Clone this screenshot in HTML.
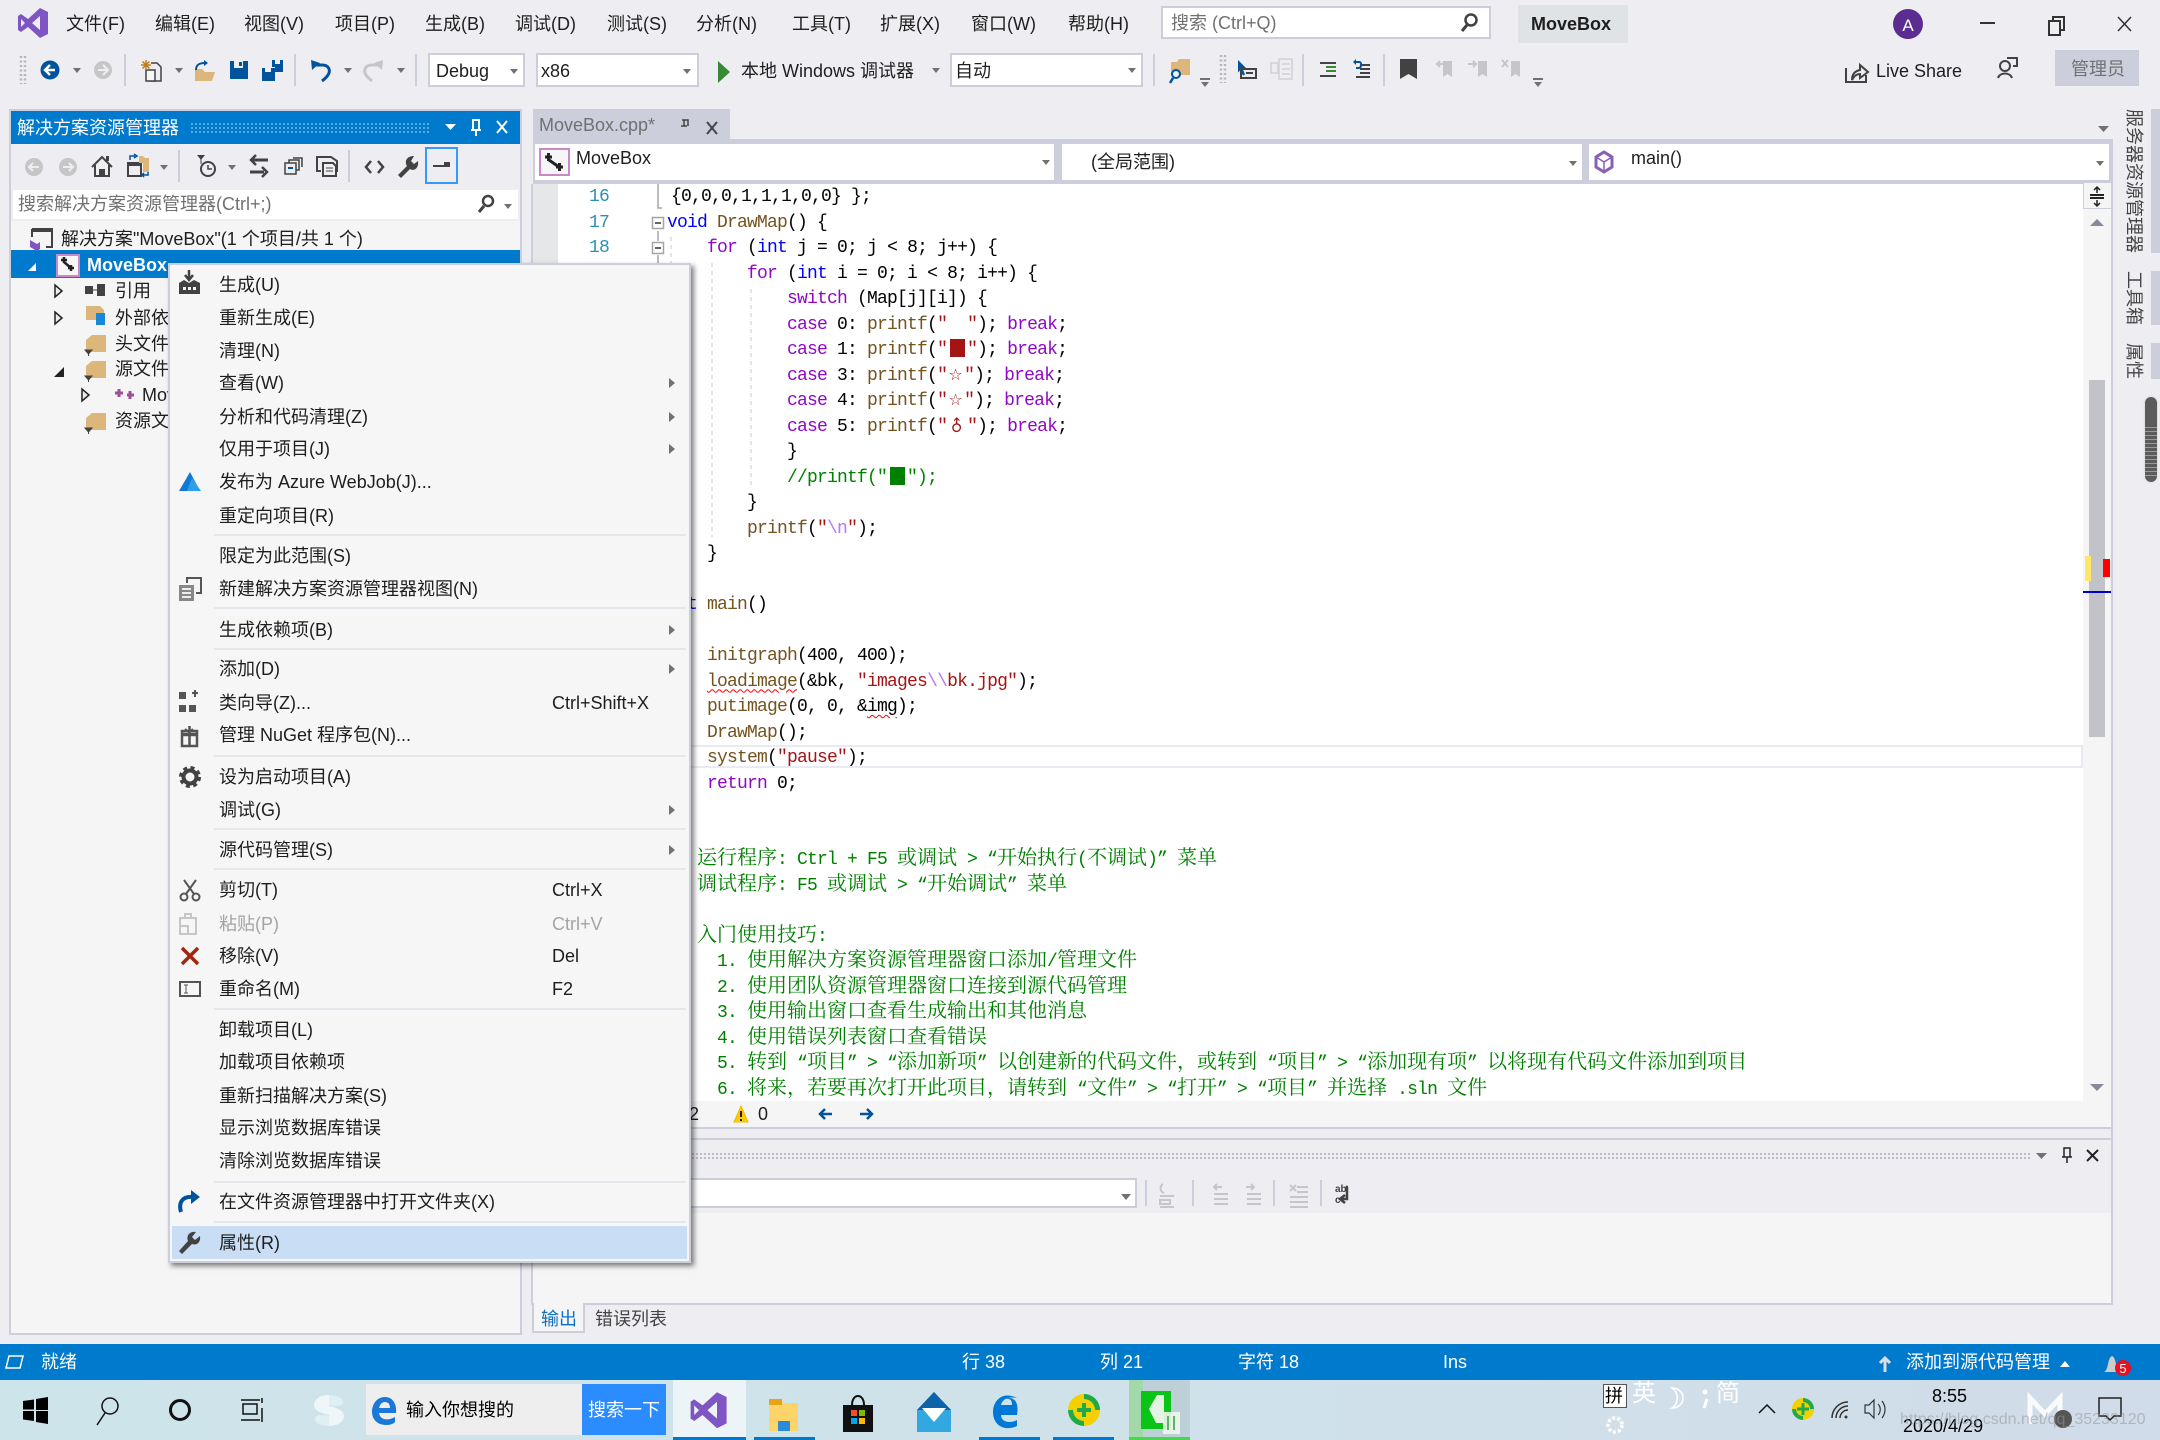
<!DOCTYPE html>
<html lang="zh-CN"><head><meta charset="utf-8"><title>MoveBox - Visual Studio</title>
<style>
html,body{margin:0;padding:0}
body{width:2160px;height:1440px;position:relative;overflow:hidden;background:#eeeef2;font:18px/26px "Liberation Sans","Noto Sans CJK SC",sans-serif;color:#1e1e1e}
.r{position:absolute}
.t{position:absolute;white-space:nowrap;line-height:26px;height:26px}
.g{color:#717171}.w{color:#fff}.d{color:#a2a4a5}
svg{position:absolute;left:0;top:0;width:2160px;height:1440px;pointer-events:none}
.c{position:absolute;white-space:pre;height:25.5px;font:18px/25.5px "Liberation Mono",monospace;letter-spacing:-.8px;color:#000;margin-top:2px}
.c i{font:20px/25.5px "Noto Serif CJK SC",serif;letter-spacing:0}
.c.x{margin-top:-3px}
.k{color:#8f08c4}.b{color:#00f}.f{color:#74531f}.s{color:#a31515}.e{color:#b776fb}.m{color:#008000}
.n{color:#2b91af;width:40px;text-align:right}
.sq{text-decoration:underline wavy #f00 1px;text-underline-offset:3px}
.bx{display:inline-block;width:15px;height:18px;margin:0 2.5px;vertical-align:-3px}
.sx{display:inline-block;width:17px;letter-spacing:0;font:16px/20px "DejaVu Sans",sans-serif;text-align:center}
.sep{position:absolute;left:214px;width:472px;height:2px;background:#e6e7ec}
.vt{position:absolute;writing-mode:vertical-rl;text-orientation:sideways;white-space:nowrap;color:#444;font-size:18px;line-height:20px}
</style></head><body>

<!-- title + toolbar boxes -->
<div class="r" style="left:1161px;top:6px;width:326px;height:29px;background:#fff;border:2px solid #cccedb"></div>
<div class="r" style="left:1518px;top:5px;width:110px;height:38px;background:#dfe3e6"></div>
<div class="r" style="left:428px;top:53px;width:93px;height:30px;background:#fff;border:2px solid #cccedb"></div>
<div class="r" style="left:536px;top:53px;width:159px;height:30px;background:#fff;border:2px solid #cccedb"></div>
<div class="r" style="left:950px;top:53px;width:189px;height:30px;background:#fff;border:2px solid #cccedb"></div>
<div class="r" style="left:2055px;top:50px;width:84px;height:36px;background:#cccedb"></div>

<span class="t" style="left:66px;top:11px">文件(F)</span>
<span class="t" style="left:155px;top:11px">编辑(E)</span>
<span class="t" style="left:244px;top:11px">视图(V)</span>
<span class="t" style="left:335px;top:11px">项目(P)</span>
<span class="t" style="left:425px;top:11px">生成(B)</span>
<span class="t" style="left:515px;top:11px">调试(D)</span>
<span class="t" style="left:607px;top:11px">测试(S)</span>
<span class="t" style="left:696px;top:11px">分析(N)</span>
<span class="t" style="left:792px;top:11px">工具(T)</span>
<span class="t" style="left:880px;top:11px">扩展(X)</span>
<span class="t" style="left:971px;top:11px">窗口(W)</span>
<span class="t" style="left:1068px;top:11px">帮助(H)</span>
<span class="t g" style="left:1171px;top:10px">搜索 (Ctrl+Q)</span>
<span class="t" style="left:1531px;top:11px;font-weight:bold">MoveBox</span>
<span class="t" style="left:436px;top:58px">Debug</span>
<span class="t" style="left:541px;top:58px">x86</span>
<span class="t" style="left:741px;top:58px">本地 Windows 调试器</span>
<span class="t" style="left:955px;top:58px">自动</span>
<span class="t" style="left:1876px;top:58px">Live Share</span>
<span class="t g" style="left:2071px;top:56px">管理员</span>

<!-- solution explorer panel -->
<div class="r" style="left:9px;top:109px;width:513px;height:1226px;background:#cccedb"></div>
<div class="r" style="left:11px;top:111px;width:509px;height:33px;background:#007acc"></div>
<div class="r" style="left:11px;top:144px;width:509px;height:44px;background:#eeeef2"></div>
<div class="r" style="left:11px;top:188px;width:509px;height:33px;background:#eeeef2"></div>
<div class="r" style="left:13px;top:190px;width:505px;height:29px;background:#fff"></div>
<div class="r" style="left:11px;top:221px;width:509px;height:1112px;background:#f5f5f5"></div>
<div class="r" style="left:11px;top:250px;width:509px;height:28px;background:#007acc"></div>
<div class="r" style="left:425px;top:147px;width:29px;height:33px;border:2px solid #3399ff"></div>
<div class="r" style="left:190px;top:122px;width:240px;height:12px;background-image:radial-gradient(#5aaee0 1px,transparent 1.2px);background-size:4px 4px"></div>
<span class="t w" style="left:17px;top:115px">解决方案资源管理器</span>
<span class="t g" style="left:18px;top:191px">搜索解决方案资源管理器(Ctrl+;)</span>
<span class="t" style="left:61px;top:226px">解决方案"MoveBox"(1 个项目/共 1 个)</span>
<span class="t w" style="left:87px;top:252px;font-weight:bold">MoveBox</span>
<span class="t" style="left:115px;top:278px">引用</span>
<span class="t" style="left:115px;top:305px">外部依赖项</span>
<span class="t" style="left:115px;top:331px">头文件</span>
<span class="t" style="left:115px;top:356px">源文件</span>
<span class="t" style="left:142px;top:382px">MoveBox.cpp</span>
<span class="t" style="left:115px;top:408px">资源文件</span>

<!-- document well -->
<div class="r" style="left:533px;top:109px;width:197px;height:30px;background:#cccedb"></div>
<div class="r" style="left:533px;top:139px;width:1580px;height:45px;background:#cccedb"></div>
<div class="r" style="left:535px;top:144px;width:519px;height:36px;background:#fff"></div>
<div class="r" style="left:1062px;top:144px;width:520px;height:36px;background:#fff"></div>
<div class="r" style="left:1589px;top:144px;width:520px;height:36px;background:#fff"></div>
<span class="t g" style="left:539px;top:112px">MoveBox.cpp*</span>
<span class="t" style="left:576px;top:145px">MoveBox</span>
<span class="t" style="left:1091px;top:149px">(全局范围)</span>
<span class="t" style="left:1631px;top:145px">main()</span>

<div class="r" style="left:533px;top:184px;width:1580px;height:917px;background:#fff"></div>
<div class="r" style="left:533px;top:184px;width:25px;height:917px;background:#e6e7e8"></div>
<div class="r" style="left:2083px;top:184px;width:28px;height:917px;background:#f5f5f5"></div>
<div class="r" style="left:2111px;top:184px;width:2px;height:1121px;background:#cccedb"></div>
<div class="r" style="left:2083px;top:183px;width:28px;height:26px;background:#f5f5f5;border-bottom:1px solid #cccedb;border-left:1px solid #cccedb;box-sizing:border-box"></div>
<div class="r" style="left:2089px;top:380px;width:16px;height:357px;background:#c2c3c9"></div>
<div class="r" style="left:2085px;top:556px;width:6px;height:25px;background:#ffe76a"></div>
<div class="r" style="left:2103px;top:559px;width:7px;height:18px;background:#f00"></div>
<div class="r" style="left:2083px;top:591px;width:28px;height:2px;background:#00c"></div>
<div class="r" style="left:691px;top:745px;width:1390px;height:19px;border:2px solid #eaeaf2;border-left:0"></div>

<!-- code -->
<div class="c n" style="left:569px;top:183px">16</div>
<div class="c n" style="left:569px;top:208.5px">17</div>
<div class="c n" style="left:569px;top:234px">18</div>
<div class="c" style="left:671px;top:183px">{0,0,0,1,1,1,0,0} };</div>
<div class="c" style="left:667px;top:208.5px"><span class="b">void</span> <span class="f">DrawMap</span>() {</div>
<div class="c" style="left:707px;top:234px"><span class="k">for</span> (<span class="b">int</span> j = 0; j &lt; 8; j++) {</div>
<div class="c" style="left:747px;top:259.5px"><span class="k">for</span> (<span class="b">int</span> i = 0; i &lt; 8; i++) {</div>
<div class="c" style="left:787px;top:285px"><span class="k">switch</span> (Map[j][i]) {</div>
<div class="c" style="left:787px;top:310.5px"><span class="k">case</span> 0: <span class="f">printf</span>(<span class="s">"  "</span>); <span class="k">break</span>;</div>
<div class="c" style="left:787px;top:336px"><span class="k">case</span> 1: <span class="f">printf</span>(<span class="s">"<span class="bx" style="background:#a31515" aria-label="■"></span>"</span>); <span class="k">break</span>;</div>
<div class="c" style="left:787px;top:361.5px"><span class="k">case</span> 3: <span class="f">printf</span>(<span class="s">"<span class="sx">☆</span>"</span>); <span class="k">break</span>;</div>
<div class="c" style="left:787px;top:387px"><span class="k">case</span> 4: <span class="f">printf</span>(<span class="s">"<span class="sx">☆</span>"</span>); <span class="k">break</span>;</div>
<div class="c" style="left:787px;top:412.5px"><span class="k">case</span> 5: <span class="f">printf</span>(<span class="s">"<span class="sx" style="width:20px;transform:rotate(-45deg)">♂</span>"</span>); <span class="k">break</span>;</div>
<div class="c" style="left:787px;top:438px">}</div>
<div class="c m" style="left:787px;top:463.5px">//printf("<span class="bx" style="background:#008000"></span>");</div>
<div class="c" style="left:747px;top:489px">}</div>
<div class="c" style="left:747px;top:514.5px"><span class="f">printf</span>(<span class="s">"</span><span class="e">\n</span><span class="s">"</span>);</div>
<div class="c" style="left:707px;top:540px">}</div>
<div class="c" style="left:667px;top:591px"><span class="b">int</span> <span class="f">main</span>()</div>
<div class="c" style="left:707px;top:642px"><span class="f">initgraph</span>(400, 400);</div>
<div class="c" style="left:707px;top:667.5px"><span class="f sq">loadimage</span>(&amp;bk, <span class="s">"images</span><span class="e">\\</span><span class="s">bk.jpg"</span>);</div>
<div class="c" style="left:707px;top:693px"><span class="f">putimage</span>(0, 0, &amp;<span class="sq">img</span>);</div>
<div class="c" style="left:707px;top:718.5px"><span class="f">DrawMap</span>();</div>
<div class="c" style="left:707px;top:744px"><span class="f">system</span>(<span class="s">"pause"</span>);</div>
<div class="c" style="left:707px;top:769.5px"><span class="k">return</span> 0;</div>
<div class="c x m" style="left:697px;top:846px"><i>运行程序</i>: Ctrl + F5 <i>或调试</i> &gt; “<i>开始执行</i>(<i>不调试</i>)” <i>菜单</i></div>
<div class="c x m" style="left:697px;top:871.5px"><i>调试程序</i>: F5 <i>或调试</i> &gt; “<i>开始调试</i>” <i>菜单</i></div>
<div class="c x m" style="left:697px;top:922.5px"><i>入门使用技巧</i>:</div>
<div class="c x m" style="left:717px;top:948px">1. <i>使用解决方案资源管理器窗口添加</i>/<i>管理文件</i></div>
<div class="c x m" style="left:717px;top:973.5px">2. <i>使用团队资源管理器窗口连接到源代码管理</i></div>
<div class="c x m" style="left:717px;top:999px">3. <i>使用输出窗口查看生成输出和其他消息</i></div>
<div class="c x m" style="left:717px;top:1024.5px">4. <i>使用错误列表窗口查看错误</i></div>
<div class="c x m" style="left:717px;top:1050px">5. <i>转到</i> “<i>项目</i>” &gt; “<i>添加新项</i>” <i>以创建新的代码文件，或转到</i> “<i>项目</i>” &gt; “<i>添加现有项</i>” <i>以将现有代码文件添加到项目</i></div>
<div class="c x m" style="left:717px;top:1075.5px">6. <i>将来，若要再次打开此项目，请转到</i> “<i>文件</i>” &gt; “<i>打开</i>” &gt; “<i>项目</i>” <i>并选择</i> .sln <i>文件</i></div>

<!-- editor status + lower panel -->
<div class="r" style="left:533px;top:1101px;width:1578px;height:26px;background:#f5f5f5"></div>
<div class="r" style="left:533px;top:1127px;width:1580px;height:2px;background:#cccedb"></div>
<div class="r" style="left:533px;top:1138px;width:1580px;height:2px;background:#cccedb"></div>
<div class="r" style="left:691px;top:1152px;width:1340px;height:8px;background-image:radial-gradient(#b8b9c4 1px,transparent 1.2px);background-size:4px 4px"></div>
<div class="r" style="left:660px;top:1178px;width:473px;height:26px;background:#fff;border:2px solid #cccedb"></div>
<div class="r" style="left:533px;top:1213px;width:1578px;height:90px;background:#f5f5f5"></div>
<div class="r" style="left:533px;top:1303px;width:1580px;height:2px;background:#cccedb"></div>
<div class="r" style="left:531px;top:184px;width:2px;height:1121px;background:#cccedb"></div>
<div class="r" style="left:532px;top:1303px;width:53px;height:30px;background:#f5f5f5;border:solid #cccedb;border-width:0 2px 2px 2px;box-sizing:border-box"></div>
<span class="t" style="left:541px;top:1306px;color:#0e70c0">输出</span>
<span class="t" style="left:595px;top:1306px;color:#444">错误列表</span>
<span class="t" style="left:689px;top:1101px">2</span>
<span class="t" style="left:758px;top:1101px">0</span>

<!-- right tool tabs -->
<span class="vt" style="left:2124px;top:109px">服务器资源管理器</span>
<span class="vt" style="left:2124px;top:271px">工具箱</span>
<span class="vt" style="left:2124px;top:343px">属性</span>
<div class="r" style="left:2151px;top:109px;width:9px;height:144px;background:#cccedb"></div>
<div class="r" style="left:2151px;top:271px;width:9px;height:54px;background:#cccedb"></div>
<div class="r" style="left:2151px;top:343px;width:9px;height:36px;background:#cccedb"></div>
<div class="r" style="left:2145px;top:397px;width:12px;height:85px;border-radius:6px;background:repeating-linear-gradient(#3fd45c 0 1px,#5c5c5c 1px 4px) 0 30px/12px 51px no-repeat,#5c5c5c;box-shadow:0 0 2px #ccc"></div>

<!-- status bar + taskbar -->
<div class="r" style="left:0;top:1344px;width:2160px;height:36px;background:#007acc"></div>
<div class="r" style="left:0;top:1380px;width:2160px;height:60px;background:linear-gradient(90deg,#cde4ea,#cfe2ea 50%,#d0dce9)"></div>
<span class="t w" style="left:41px;top:1349px">就绪</span>
<span class="t w" style="left:962px;top:1349px">行 38</span>
<span class="t w" style="left:1100px;top:1349px">列 21</span>
<span class="t w" style="left:1238px;top:1349px">字符 18</span>
<span class="t w" style="left:1443px;top:1349px">Ins</span>
<span class="t w" style="left:1906px;top:1349px">添加到源代码管理</span>

<div class="r" style="left:366px;top:1384px;width:216px;height:51px;background:#eee"></div>
<div class="r" style="left:582px;top:1384px;width:84px;height:51px;background:#2a8cff"></div>
<span class="t" style="left:406px;top:1397px;color:#000">输入你想搜的</span>
<span class="t w" style="left:588px;top:1397px">搜索一下</span>
<div class="r" style="left:673px;top:1380px;width:73px;height:60px;background:#edf4f8"></div>
<div class="r" style="left:673px;top:1437px;width:73px;height:3px;background:#0078cf"></div>
<div class="r" style="left:754px;top:1437px;width:61px;height:3px;background:#0078cf"></div>
<div class="r" style="left:979px;top:1437px;width:61px;height:3px;background:#0078cf"></div>
<div class="r" style="left:1053px;top:1437px;width:61px;height:3px;background:#0078cf"></div>
<div class="r" style="left:1129px;top:1380px;width:61px;height:60px;background:linear-gradient(90deg,#a3d8ab 0 14px,#bdd0d8 14px)"></div>
<div class="r" style="left:1129px;top:1437px;width:61px;height:3px;background:#44d84a"></div>

<div class="r" style="left:1603px;top:1384px;width:22px;height:22px;background:#fff;border:1px solid #555"></div>
<span class="t" style="left:1605px;top:1383px;color:#000">拼</span>
<span class="t w" style="left:1632px;top:1381px;font-size:24px">英</span>
<span class="t w" style="left:1716px;top:1381px;font-size:24px">简</span>
<span class="t" style="left:1932px;top:1383px;color:#000">8:55</span>
<span class="t" style="left:1903px;top:1413px;color:#000">2020/4/29</span>

<!-- icons -->
<svg viewBox="0 0 2160 1440" xmlns="http://www.w3.org/2000/svg">
<path fill="#7f55c4" fill-rule="evenodd" d="M40 8l8 4v22l-8 4-12-11-7 5-3-2V16l3-2 7 5zM40 16l-8 7 8 7zM21 19v8l4-4z"/>
<!-- carets -->
<g fill="#717171">
<path d="M73 68h8l-4 5zM175 68h8l-4 5zM344 68h8l-4 5zM397 68h8l-4 5zM510 69h8l-4 5zM683 69h8l-4 5zM932 68h8l-4 5zM1128 68h8l-4 5z"/>
<path d="M1200 78h10v2h-10zM1201 82h8l-4 5zM1533 78h10v2h-10zM1534 82h8l-4 5z"/>
<path d="M160 165h8l-4 5zM228 165h8l-4 5zM504 204h8l-4 5zM1042 160h8l-4 5zM1139 161h8l-4 5zM1569 161h8l-4 5zM2096 161h8l-4 5zM2098 126h11l-5.500 6zM1121 1194h10l-5 6zM2036 1153h11l-5.500 6z"/>
</g>
<!-- back / forward -->
<circle cx="50" cy="70" r="9.500" fill="#00539c"/><path d="M55 70H46M50 65l-5 5 5 5" fill="none" stroke="#fff" stroke-width="2.500"/>
<circle cx="103" cy="70" r="9" fill="#c6c6c9"/><path d="M98 70h9M103 65l5 5-5 5" fill="none" stroke="#eee" stroke-width="2"/>
<path d="M125 54v32M295 54v32M416 54v32M1154 54v32M1303 54v32M1384 54v32M179 150v32M349 150v32" stroke="#cccedb" stroke-width="2"/>
<path d="M21 56v28M25 56v28M1221 55v28M1225 55v28" stroke="#b5b6bb" stroke-width="2.500" stroke-dasharray="2 2.500"/>
<!-- new project -->
<path d="M151 63h6l4 4v14h-11v-4" fill="none" stroke="#424242" stroke-width="1.500"/><path d="M146 70v11h9V70z" fill="#f6f6f6" stroke="#424242" stroke-width="1.500"/>
<path d="M146 60v10M141 65h10M142.500 61.500l7 7M149.500 61.500l-7 7" stroke="#c27d1a" stroke-width="1.500"/>
<!-- open folder -->
<path d="M195 69h7l3 3h10l-3 9h-17z" fill="#dcb67a"/><path d="M196 70c0-5 3-7 9-7" fill="none" stroke="#00539c" stroke-width="2"/><path d="M204 60l4 3-4 3z" fill="#00539c"/>
<!-- save -->
<path d="M230 61h18v18h-18z" fill="#00539c"/><path d="M234 61h9v7h-9z" fill="#eee"/><rect x="239" y="62" width="3" height="4" fill="#00539c"/>
<path d="M262 68h13v13h-13z" fill="#00539c"/><path d="M272 60h11v12h-8v-5h-3z" fill="#00539c"/><rect x="265" y="68" width="6" height="4" fill="#eee"/><rect x="275" y="60" width="5" height="4" fill="#eee"/>
<!-- undo redo -->
<path d="M316 65h6c7 0 8 5 7 8-1 3-3 5-7 8" fill="none" stroke="#00539c" stroke-width="3"/><path d="M311 60l1 10 8-7z" fill="#00539c"/>
<path d="M378 65h-6c-7 0-8 5-7 8 1 3 3 5 7 8" fill="none" stroke="#c6c6c9" stroke-width="3"/><path d="M383 60l-1 10-8-7z" fill="#c6c6c9"/>
<!-- play -->
<path d="M718 61l12 11-12 11z" fill="#388a34"/>
<!-- search glass -->
<g fill="none" stroke="#424242"><circle cx="1471" cy="20" r="5.500" stroke-width="2.500"/><path d="M1467 25l-5 6" stroke-width="3"/>
<circle cx="488" cy="201" r="5" stroke-width="2.500"/><path d="M484 206l-5 6" stroke-width="3"/></g>
<!-- avatar -->
<circle cx="1908" cy="24" r="15" fill="#5c2d91"/><text x="1908" y="31" font-size="17" fill="#fff" text-anchor="middle" font-family="Liberation Sans">A</text>
<!-- window buttons -->
<path d="M1980 23h15" stroke="#333" stroke-width="2"/><path d="M2049 21h11v14h-11zM2053 21v-4h11v13h-4" fill="none" stroke="#333" stroke-width="2"/><path d="M2118 17l13 14m0-14l-13 14" stroke="#333" stroke-width="1.500"/>
<!-- right toolbar icons -->
<path d="M1171 62h6l2-3h11v16h-19z" fill="#dcb67a"/><circle cx="1176" cy="74" r="4" fill="#eee" stroke="#00539c" stroke-width="2"/><path d="M1173 78l-3 5" stroke="#00539c" stroke-width="2.500"/>
<path d="M1238 60l9 9-4 .5 2 5-2 1-3-5-2 2z" fill="#00539c"/><path d="M1241 69h15v9h-15zM1246 73h7" fill="none" stroke="#424242" stroke-width="2"/>
<path d="M1271 63h7v10h-7zM1279 59h13v20h-13zM1282 64h8M1282 69h8M1282 74h8" fill="none" stroke="#d0d1d5" stroke-width="1.500"/>
<path d="M1320 63h4M1324 63h12M1326 67h10M1326 71h10M1320 76h16" stroke="#424242" stroke-width="2"/><path d="M1326 67h10M1326 71h10" stroke="#388a34" stroke-width="2"/>
<path d="M1360 65h10M1360 69h10M1360 73h10M1356 77h14" stroke="#424242" stroke-width="2"/><path d="M1354 62h5c3 0 3 5 0 6h-3" fill="none" stroke="#00539c" stroke-width="2"/><path d="M1356 59v6l-3-3z" fill="#00539c"/>
<path d="M1400 59h17v20l-8.500-5-8.500 5z" fill="#424242"/>
<path d="M1443 61h9v16l-4.500-3-4.500 3z" fill="#c6c6c9"/><path d="M1445 64h-8M1440 61l-3 3 3 3" fill="none" stroke="#c6c6c9" stroke-width="2"/>
<path d="M1478 61h9v16l-4.500-3-4.500 3z" fill="#c6c6c9"/><path d="M1468 64h8M1473 61l3 3-3 3" fill="none" stroke="#c6c6c9" stroke-width="2"/>
<path d="M1511 61h9v16l-4.500-3-4.500 3z" fill="#c6c6c9"/><path d="M1502 60l6 7m0-7l-6 7" stroke="#c6c6c9" stroke-width="2"/>
<!-- live share -->
<path d="M1846 68v14h20V75" fill="none" stroke="#424242" stroke-width="2"/><path d="M1852 80c0-6 3-9 8-10v-5l8 7-8 6v-4c-3 0-6 2-8 6z" fill="none" stroke="#424242" stroke-width="2"/>
<circle cx="2005" cy="66" r="5" fill="none" stroke="#424242" stroke-width="2"/><path d="M1998 78c2-6 12-6 14 0" fill="none" stroke="#424242" stroke-width="2"/><path d="M2007 58h10v8h-4" fill="none" stroke="#424242" stroke-width="2"/>
<!-- explorer header -->
<path d="M445 124h11l-5.500 6z" fill="#fff"/>
<path d="M473 120h6v10h-6zM476 130v6M471 130h10" fill="none" stroke="#fff" stroke-width="2"/><path d="M497 121l10 12m0-12l-10 12" stroke="#fff" stroke-width="2"/>
<!-- explorer toolbar -->
<circle cx="34" cy="167" r="9" fill="#c6c6c9"/><path d="M39 167h-9M33 163l-4 4 4 4" fill="none" stroke="#eee" stroke-width="2"/>
<circle cx="68" cy="167" r="9" fill="#c6c6c9"/><path d="M63 167h9M69 163l4 4-4 4" fill="none" stroke="#eee" stroke-width="2"/>
<path d="M92 167l10-10 10 10M95 165v11h14v-11" fill="none" stroke="#424242" stroke-width="2"/><rect x="99" y="169" width="6" height="7" fill="#424242"/><path d="M106 156h3v5h-3z" fill="#424242"/>
<path d="M128 163h13v13h-13z" fill="none" stroke="#424242" stroke-width="2"/><path d="M128 163h13v3h-13z" fill="#424242"/><path d="M139 156h4l2 2h4v14h-6v-9h-4z" fill="#dcb67a"/><path d="M130 160v-4h5M134 154l3 2-3 2" fill="none" stroke="#00539c" stroke-width="1.500"/><path d="M148 172v3h-5M144 173l-2 2 2 2" fill="none" stroke="#00539c" stroke-width="1.500"/>
<circle cx="208" cy="169" r="7" fill="none" stroke="#424242" stroke-width="2"/><path d="M208 165v4h4" fill="none" stroke="#424242" stroke-width="1.500"/><path d="M197 155h8l-4 5z" fill="#424242"/><path d="M201 159v5" stroke="#424242"/>
<path d="M252 160h16M250 172h14" stroke="#424242" stroke-width="3"/><path d="M256 155l-5 5 5 5" fill="none" stroke="#424242" stroke-width="2.500"/><path d="M262 167l5 5-5 5" fill="none" stroke="#424242" stroke-width="2.500"/>
<path d="M285 163h11v11h-11zM289 163v-3h10v10h-3M293 158h9v9" fill="none" stroke="#424242" stroke-width="1.500"/><path d="M288 168h5" stroke="#00539c" stroke-width="2"/>
<path d="M320 157h11l6 4v10h-5M320 157h-3v14h4" fill="none" stroke="#424242" stroke-width="2"/><path d="M323 163h10l3 3v10h-13z" fill="#eee" stroke="#424242" stroke-width="2"/><path d="M326 168h7M326 171h7" stroke="#424242"/>
<path d="M371 161l-5 6 5 6M378 161l5 6-5 6" fill="none" stroke="#424242" stroke-width="2.500"/>
<path d="M414 156c-7 0-10 5-7 10l-9 9 3 3 9-9c5 3 9-2 8-8l-4 3-3-3z" fill="#424242"/>
<path d="M433 167h17v-5h-6v3h-11z" fill="#424242"/>
<!-- tree icons -->
<path d="M32 229h20v18h-6M32 229v8" fill="none" stroke="#424242" stroke-width="2"/><path d="M32 229h20v3H32z" fill="#424242"/><path d="M30 240l7 4 3-2v7l-3 2-7-4z" fill="#7f55c4"/>
<path d="M27 263v8h-8z" fill="#fff" transform="translate(9 0)"/>
<rect x="57" y="255" width="22" height="21" fill="#f6f6f6" stroke="#c78ac7" stroke-width="2"/><path d="M61 260h6M64 257v6M68 268h6M71 265v6M64 262l7 6" fill="none" stroke="#222" stroke-width="2.500"/>
<path d="M55 285v12l7-6zM55 312v12l7-6zM82 389v12l7-6z" fill="#eee" stroke="#222" stroke-width="1.500"/>
<path d="M54 377l10-10v10z" fill="#222"/>
<rect x="85" y="286" width="8" height="8" fill="#424242"/><rect x="97" y="284" width="8" height="12" fill="#424242"/><path d="M93 290h4" stroke="#424242"/>
<path d="M86 320v-14h14l4 4v10z" fill="#dcb67a"/><rect x="96" y="313" width="9" height="12" fill="#1a88d8"/>
<path d="M86 340l6-5h14v17H86z" fill="#dcb67a"/><path d="M85 350h7l-3.500 4zM88.500 353v3" stroke="#424242" fill="#424242"/>
<path d="M86 366l6-5h14v17H86z" fill="#dcb67a"/><path d="M85 376h7l-3.500 4zM88.500 379v3" stroke="#424242" fill="#424242"/>
<path d="M115 393h8M119 389v8M127 395h7M130 391v8" stroke="#9b4f96" stroke-width="3"/>
<path d="M86 418l6-5h14v17H86z" fill="#dcb67a"/><path d="M85 428h7l-3.500 4zM88.500 431v3" stroke="#424242" fill="#424242"/>
<!-- tab + nav icons -->
<path d="M681 126h6M684 120v6M682 120h6v6" fill="none" stroke="#444" stroke-width="1.500"/><path d="M707 122l10 12m0-12l-10 12" stroke="#444" stroke-width="2"/>
<rect x="540" y="149" width="29" height="26" fill="#f6f6f6" stroke="#c78ac7" stroke-width="2"/><path d="M545 157h7M548.500 153v8M556 167h7M559.500 163v8M549 160l10 7" fill="none" stroke="#222" stroke-width="3"/>
<path d="M1604 152l8 5v10l-8 5-8-5v-10z" fill="none" stroke="#8860b8" stroke-width="3"/><path d="M1604 162v10M1604 162l-8-5M1604 162l8-5" stroke="#8860b8" stroke-width="1.500"/>
<!-- splitter and scroll arrows -->
<path d="M2090 195h14M2090 198h14" stroke="#222" stroke-width="2"/><path d="M2097 187v6M2097 200v6M2094 190l3-3 3 3M2094 203l3 3 3-3" fill="none" stroke="#222" stroke-width="1.500"/>
<path d="M2090 226l7-7 7 7z" fill="#868999"/><path d="M2090 1084l7 7 7-7z" fill="#868999"/>
<!-- outlining -->
<path d="M658 184v24h4M658 231v10M658 255v8" fill="none" stroke="#a5a5a5" stroke-width="1.500"/>
<rect x="652.500" y="217.500" width="11" height="11" fill="#fff" stroke="#a5a5a5" stroke-width="1.500"/><rect x="652.500" y="242.500" width="11" height="11" fill="#fff" stroke="#a5a5a5" stroke-width="1.500"/>
<path d="M655 223h6M655 248h6" stroke="#333" stroke-width="1.500"/>
<path d="M671 237v26M712 263v274M751 289v198" stroke="#c8c8c8" stroke-dasharray="4 4"/>
<!-- lower panel icons -->
<path d="M741 1106l7 16h-14z" fill="#fc0" stroke="#f5b800"/><path d="M741 1111v6M741 1119v2" stroke="#222" stroke-width="2"/>
<path d="M832 1114h-12M825 1109l-5 5 5 5" fill="none" stroke="#00539c" stroke-width="2.500"/><path d="M860 1114h12M867 1109l5 5-5 5" fill="none" stroke="#00539c" stroke-width="2.500"/>
<path d="M2064 1148h6v9h-6zM2067 1157v6M2062 1157h10" fill="none" stroke="#222" stroke-width="1.500"/><path d="M2087 1150l11 11m0-11l-11 11" stroke="#222" stroke-width="2"/>
<path d="M1146 1180v26M1193 1180v26M1274 1180v26M1321 1180v26" stroke="#cccedb" stroke-width="2"/>
<path d="M1163 1184a5 5 0 0 0 1 9M1160 1196h14M1160 1200h10v4h-10zM1160 1207h14M1214 1194h14M1214 1199h14M1214 1204h14M1247 1194h14M1247 1199h14M1247 1204h14M1290 1197h18M1290 1202h18M1290 1207h18M1297 1187h11M1297 1192h11" stroke="#c6c6c9" stroke-width="2" fill="none"/>
<path d="M1290 1185l6 6m0-6l-6 6" stroke="#c6c6c9" stroke-width="2"/>
<path d="M1222 1187h-8M1217 1184l-3 3 3 3M1246 1187h8M1251 1184l3 3-3 3" stroke="#c6c6c9" stroke-width="2" fill="none"/>
<path d="M1348 1187h-1v12h-8M1345 1195l-5 4 5 4" fill="none" stroke="#424242" stroke-width="2.500"/>
<text x="1335" y="1192" font-size="10" fill="#424242" font-family="Liberation Sans" font-weight="bold">ab</text><text x="1335" y="1203" font-size="10" fill="#424242" font-family="Liberation Sans" font-weight="bold">c</text>
<!-- status -->
<path d="M9 1356h14l-3 12H6z" fill="none" stroke="#fff" stroke-width="1.500"/>
<path d="M1885 1358v14M1880 1363l5-5 5 5" fill="none" stroke="#ddd" stroke-width="3"/>
<path d="M2060 1367l5-6 5 6z" fill="#fff"/>
<path d="M2104 1372c5-2 3-14 8-16 5 2 3 14 8 16z" fill="#ccc"/><circle cx="2123" cy="1368" r="8" fill="#e81123"/><text x="2123" y="1373" font-size="13" fill="#fff" text-anchor="middle" font-family="Liberation Sans">5</text>
<!-- taskbar -->
<path d="M23 1401l11-1.500v10H23zM36 1399l12-2v13H36zM23 1411h11v10l-11-1.500zM36 1411h12v13l-12-2z" fill="#000"/>
<circle cx="110" cy="1406" r="8" fill="none" stroke="#111" stroke-width="1.500"/><path d="M105 1413l-8 12" stroke="#111" stroke-width="1.500"/>
<circle cx="180" cy="1410" r="9.500" fill="none" stroke="#111" stroke-width="3"/>
<path d="M241 1400h19M243 1404h14v10h-14zM241 1420h19M262 1398v5M262 1408v14" fill="none" stroke="#111" stroke-width="1.500"/>
<path d="M329 1395c-10 0-15 5-15 10s6 8 15 10zM329 1426c10 0 15-5 15-10s-6-8-15-10z" fill="#eef6f9"/><path d="M329 1395c8 0 14 3 14 7s-5 5-14 3zM329 1426c-8 0-14-3-14-7s5-5 14-3z" fill="#dff0f5"/>
<path d="M385 1397c-9 0-13 8-13 15s5 13 14 13c4 0 7-1 9-3v-5c-7 4-15 3-16-4h17c1-10-4-16-11-16zm0 5c3 0 5 2 5 6h-11c1-4 3-6 6-6z" fill="#1a78d8"/>
<g transform="translate(669 1391) scale(1.200)"><path fill="#7f55c4" fill-rule="evenodd" d="M40 8l8 4v22l-8 4-12-11-7 5-3-2V16l3-2 7 5zM40 16l-8 7 8 7zM21 19v8l4-4z" transform="translate(0 -7)"/></g>
<path d="M769 1399h12l2 4h15v28h-29z" fill="#fcd469"/><path d="M769 1399h13v6h-13z" fill="#e8a317"/><path d="M778 1431v-10h12v10z" fill="#2a8bd8"/>
<path d="M843 1405h30v27h-30z" fill="#111"/><path d="M852 1405c0-12 12-12 12 0" fill="none" stroke="#111" stroke-width="2"/><rect x="851" y="1410" width="6" height="6" fill="#f25022"/><rect x="859" y="1410" width="6" height="6" fill="#7fba00"/><rect x="851" y="1418" width="6" height="6" fill="#00a4ef"/><rect x="859" y="1418" width="6" height="6" fill="#ffb900"/>
<path d="M917 1410l17-18 17 18v22h-34z" fill="#33a8e0"/><path d="M917 1410l17-18 17 18z" fill="#0e63a8"/><path d="M922 1408h24l-12 14z" fill="#fff"/>
<path d="M1017 1398c-14-7-24 2-24 14 0 13 11 20 24 14v-6c-7 4-16 2-16-5h16c2-12-2-17-8-17-2 0-3 0-4 1 6-1 7 2 7 6h-11c1-5 6-9 16-7z" fill="#0078d7"/>
<circle cx="1084" cy="1410" r="16" fill="#f4d000"/><path d="M1084 1394a16 16 0 0 1 16 16h-5a11 11 0 0 0-11-11zM1084 1426a16 16 0 0 1-16-16h5a11 11 0 0 0 11 11z" fill="#1eaa4b"/><path d="M1084 1403v14M1077 1410h14" stroke="#1eaa4b" stroke-width="4"/>
<path d="M1141 1391h30v38h-30z" fill="#0cc418"/><path d="M1157 1395l-8 14 7 14h8v-28z" fill="#e4f4e2"/><rect x="1163" y="1412" width="17" height="22" fill="#eef5ef" opacity=".9"/><path d="M1168 1416v14M1174 1416v14" stroke="#5db56a" stroke-width="2"/>
<!-- tray -->
<path d="M1672 1388a9 11 0 0 1 0 20c6 0 11-4 11-10s-5-10-11-10z" fill="none" stroke="#fff" stroke-width="1.500"/><circle cx="1705" cy="1392" r="2.500" fill="#fff"/><path d="M1707 1399l-3 9" stroke="#fff" stroke-width="3"/>
<circle cx="1615" cy="1425" r="7" fill="none" stroke="#fff" stroke-width="3.500" stroke-dasharray="3 2"/>
<path d="M1759 1413l8-8 8 8" fill="none" stroke="#111" stroke-width="1.500"/>
<circle cx="1803" cy="1409" r="11" fill="#f4d000"/><path d="M1803 1398a11 11 0 0 1 11 11h-4a7 7 0 0 0-7-7zM1803 1420a11 11 0 0 1-11-11h4a7 7 0 0 0 7 7z" fill="#1eaa4b"/><path d="M1803 1403v12M1797 1409h12" stroke="#1eaa4b" stroke-width="3"/>
<path d="M1832 1418a16 16 0 0 1 16-16M1836 1418a12 12 0 0 1 12-12M1840 1418a8 8 0 0 1 8-8" fill="none" stroke="#333" stroke-width="1.500"/><circle cx="1846" cy="1417" r="1.500" fill="#333"/>
<path d="M1865 1405h4l5-5v18l-5-5h-4zM1878 1404c3 3 3 8 0 11M1882 1401c4 5 4 12 0 17" fill="none" stroke="#333" stroke-width="1.200"/>
<path d="M2030 1424v-26l15 16 15-16v26" fill="none" stroke="#fff" stroke-width="5" opacity=".85"/><circle cx="2063" cy="1419" r="9" fill="#555"/>
<path d="M2099 1398h22v18h-7l-4 4-4-4h-7z" fill="none" stroke="#222" stroke-width="1.500"/>
</svg>
<span class="t" style="left:1900px;top:1407px;font-size:16px;color:rgba(150,150,150,.55)">https://blog.csdn.net/qq_35233120</span>

<!-- context menu -->
<div class="r" style="left:168px;top:263px;width:519px;height:996px;padding:0;background:#f6f6f6;border:2px solid #cccedb;box-shadow:3px 3px 5px rgba(0,0,0,.5)"></div>
<div class="r" style="left:172px;top:1226px;width:515px;height:33px;background:#c9def5"></div>
<div class="sep" style="top:534px"></div><div class="sep" style="top:607px"></div><div class="sep" style="top:648px"></div><div class="sep" style="top:755px"></div><div class="sep" style="top:828px"></div><div class="sep" style="top:868px"></div><div class="sep" style="top:1008px"></div><div class="sep" style="top:1181px"></div><div class="sep" style="top:1221px"></div>
<span class="t" style="left:219px;top:272px">生成(U)</span>
<span class="t" style="left:219px;top:305px">重新生成(E)</span>
<span class="t" style="left:219px;top:338px">清理(N)</span>
<span class="t" style="left:219px;top:370px">查看(W)</span>
<span class="t" style="left:219px;top:404px">分析和代码清理(Z)</span>
<span class="t" style="left:219px;top:436px">仅用于项目(J)</span>
<span class="t" style="left:219px;top:469px">发布为 Azure WebJob(J)...</span>
<span class="t" style="left:219px;top:503px">重定向项目(R)</span>
<span class="t" style="left:219px;top:543px">限定为此范围(S)</span>
<span class="t" style="left:219px;top:576px">新建解决方案资源管理器视图(N)</span>
<span class="t" style="left:219px;top:617px">生成依赖项(B)</span>
<span class="t" style="left:219px;top:656px">添加(D)</span>
<span class="t" style="left:219px;top:690px">类向导(Z)...</span>
<span class="t" style="left:552px;top:690px">Ctrl+Shift+X</span>
<span class="t" style="left:219px;top:722px">管理 NuGet 程序包(N)...</span>
<span class="t" style="left:219px;top:764px">设为启动项目(A)</span>
<span class="t" style="left:219px;top:797px">调试(G)</span>
<span class="t" style="left:219px;top:837px">源代码管理(S)</span>
<span class="t" style="left:219px;top:877px">剪切(T)</span>
<span class="t" style="left:552px;top:877px">Ctrl+X</span>
<span class="t d" style="left:219px;top:911px">粘贴(P)</span>
<span class="t d" style="left:552px;top:911px">Ctrl+V</span>
<span class="t" style="left:219px;top:943px">移除(V)</span>
<span class="t" style="left:552px;top:943px">Del</span>
<span class="t" style="left:219px;top:976px">重命名(M)</span>
<span class="t" style="left:552px;top:976px">F2</span>
<span class="t" style="left:219px;top:1017px">卸载项目(L)</span>
<span class="t" style="left:219px;top:1049px">加载项目依赖项</span>
<span class="t" style="left:219px;top:1083px">重新扫描解决方案(S)</span>
<span class="t" style="left:219px;top:1115px">显示浏览数据库错误</span>
<span class="t" style="left:219px;top:1148px">清除浏览数据库错误</span>
<span class="t" style="left:219px;top:1189px">在文件资源管理器中打开文件夹(X)</span>
<span class="t" style="left:219px;top:1230px">属性(R)</span>

<svg viewBox="0 0 2160 1440" xmlns="http://www.w3.org/2000/svg">
<g fill="#717171"><path d="M669 378l6 5-6 5zM669 412l6 5-6 5zM669 444l6 5-6 5zM669 625l6 5-6 5zM669 664l6 5-6 5zM669 805l6 5-6 5zM669 845l6 5-6 5z"/></g>
<path d="M189 270v8M185 275l4 5 4-5" fill="none" stroke="#424242" stroke-width="2.500"/><path d="M179 283l5-3 5 3 5-3 6 3v11h-21z" fill="#424242"/><path d="M183 287h3v3h-3zM188 287h3v3h-3zM193 287h3v3h-3z" fill="#f6f6f6"/>
<path d="M190 472l-11 19h8l7-8 6 8h0z" fill="#0d79d4"/><path d="M192 478l9 13h-14z" fill="#2f9fe8"/>
<path d="M179 585h15v16h-15z" fill="#888"/><path d="M182 589h9M182 593h9M182 597h9" stroke="#eee" stroke-width="2"/><path d="M187 583v-5h14v15h-5" fill="none" stroke="#555" stroke-width="2"/>
<path d="M179 692h7v7h-7zM179 705h7v7h-7zM189 705h7v7h-7z" fill="#555"/><path d="M195 690v7M192 693h6" stroke="#555" stroke-width="2"/>
<path d="M182 735h15v11h-15z M182 731h15v3h-15z" fill="none" stroke="#555" stroke-width="2.500"/><path d="M189.500 726v20" stroke="#555" stroke-width="2.500"/><path d="M185 729l4 3 4-3" fill="none" stroke="#555" stroke-width="2"/>
<circle cx="190" cy="777" r="6.500" fill="none" stroke="#424242" stroke-width="4"/><circle cx="190" cy="777" r="9.500" fill="none" stroke="#424242" stroke-width="3" stroke-dasharray="4 3.500"/>
<path d="M184 880l10 14M196 880l-10 14" stroke="#555" stroke-width="2"/><circle cx="184" cy="897" r="3.500" fill="none" stroke="#555" stroke-width="2"/><circle cx="196" cy="897" r="3.500" fill="none" stroke="#555" stroke-width="2"/>
<path d="M180 918h16v16h-16zM180 926h8v8M185 918v-4h6v4" fill="none" stroke="#c6c6c9" stroke-width="2"/>
<path d="M182 948l16 16m0-16l-16 16" stroke="#a1260d" stroke-width="3.500"/>
<rect x="180" y="982" width="20" height="14" fill="none" stroke="#555" stroke-width="2"/><path d="M184 985h4M184 993h4M186 985v8" stroke="#555"/>
<path d="M181 1212c-3-10 2-16 12-15" fill="none" stroke="#00539c" stroke-width="4"/><path d="M191 1190l9 7-9 7z" fill="#00539c"/>
<path d="M196 1232c-6-1-10 3-8 9l-9 10 3 3 10-10c5 2 9-2 8-8l-5 4-3-3z" fill="#424242"/>
</svg>
</body></html>
